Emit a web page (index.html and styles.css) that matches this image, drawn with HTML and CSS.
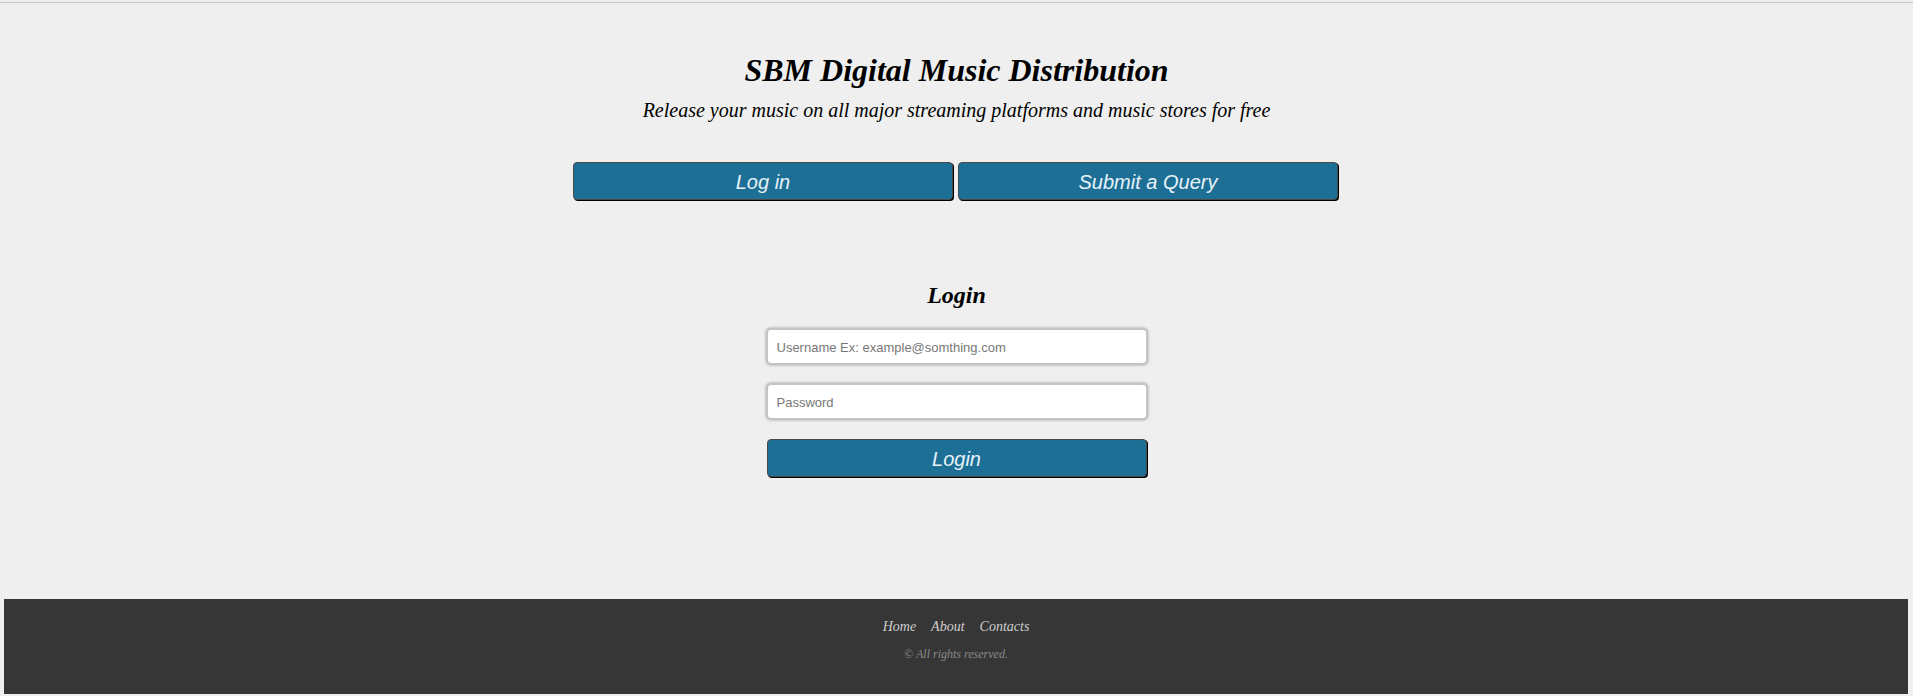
FILE: index.html
```html
<!DOCTYPE html>
<html lang="en">
<head>
<meta charset="utf-8">
<title>SBM Digital Music Distribution</title>
<link rel="stylesheet" href="styles.css">
</head>
<body>
<div class="page">
  <div class="topline"></div>
  <header class="header">
    <h1 class="title">SBM Digital Music Distribution</h1>
    <p class="subtitle">Release your music on all major streaming platforms and music stores for free</p>
    <nav class="tabs">
      <button class="btn tab">Log in</button>
      <button class="btn tab">Submit a Query</button>
    </nav>
  </header>
  <main class="login">
    <h3 class="login-title">Login</h3>
    <form class="login-form">
      <input class="field" type="text" placeholder="Username Ex: example@somthing.com">
      <input class="field" type="password" placeholder="Password">
      <button class="btn submit" type="button">Login</button>
    </form>
  </main>
  <footer class="footer">
    <div class="footer-links">
      <a href="#">Home</a>
      <a href="#">About</a>
      <a href="#">Contacts</a>
    </div>
    <p class="copy">© All rights reserved.</p>
  </footer>
</div>
</body>
</html>
```

FILE: styles.css
```css
* { box-sizing: border-box; }
html, body { margin: 0; padding: 0; }
body {
  background: #efefef;
  font-family: "Liberation Serif", "Times New Roman", serif;
  color: #000;
}
.page {
  height: 696px;
  display: flex;
  flex-direction: column;
}
.topline {
  margin-top: 2px;
  height: 1px;
  background: #c6c6c6;
}
.header {
  display: flex;
  flex-direction: column;
  align-items: center;
}
.title {
  margin: 49px 0 0;
  font-size: 32px;
  line-height: 36px;
  font-style: italic;
  font-weight: bold;
}
.subtitle {
  margin: 10px 0 0;
  font-size: 20px;
  line-height: 24px;
  font-style: italic;
}
.tabs {
  margin-top: 40px;
  display: flex;
  gap: 5px;
  transform: translateX(-1px);
}
.btn {
  font-family: "Liberation Sans", Arial, sans-serif;
  font-style: italic;
  font-size: 20px;
  color: #e6f2f8;
  background: #1d6f96;
  border: 1px solid #4a4a4a;
  border-radius: 4px;
  box-shadow: 1px 1px 0 #000;
  padding: 2px 0 0;
  cursor: pointer;
}
.tab {
  width: 380px;
  height: 38px;
}
.login {
  display: flex;
  flex-direction: column;
  align-items: center;
}
.login-title {
  margin: 81px 0 0;
  font-size: 24px;
  line-height: 28px;
  font-style: italic;
  font-weight: bold;
}
.login-form {
  margin-top: 19px;
  display: flex;
  flex-direction: column;
  align-items: center;
  gap: 18px;
}
.field {
  width: 382px;
  height: 37px;
  border: 2px solid #c4c4c4;
  border-radius: 5px;
  background: #fff;
  box-shadow: 0 0 3px rgba(0,0,0,0.35);
  padding: 1px 0 0 9px;
  font-family: "Liberation Sans", Arial, sans-serif;
  font-size: 13px;
  color: #333;
  outline: none;
}
.field::placeholder { color: #777; }
.submit {
  width: 380px;
  height: 38px;
  margin-top: 1px;
}
.footer {
  margin: auto 5px 2px 4px;
  height: 95px;
  background: #363636;
  display: flex;
  flex-direction: column;
  align-items: center;
  padding-top: 20px;
}
.footer-links {
  display: flex;
  gap: 15px;
  font-size: 14px;
  line-height: 16px;
  font-style: italic;
}
.footer-links a {
  color: #cfcfcf;
  text-decoration: none;
}
.copy {
  margin: 12px 0 0;
  font-size: 12px;
  line-height: 14px;
  font-style: italic;
  color: #8a8a8a;
}
```
